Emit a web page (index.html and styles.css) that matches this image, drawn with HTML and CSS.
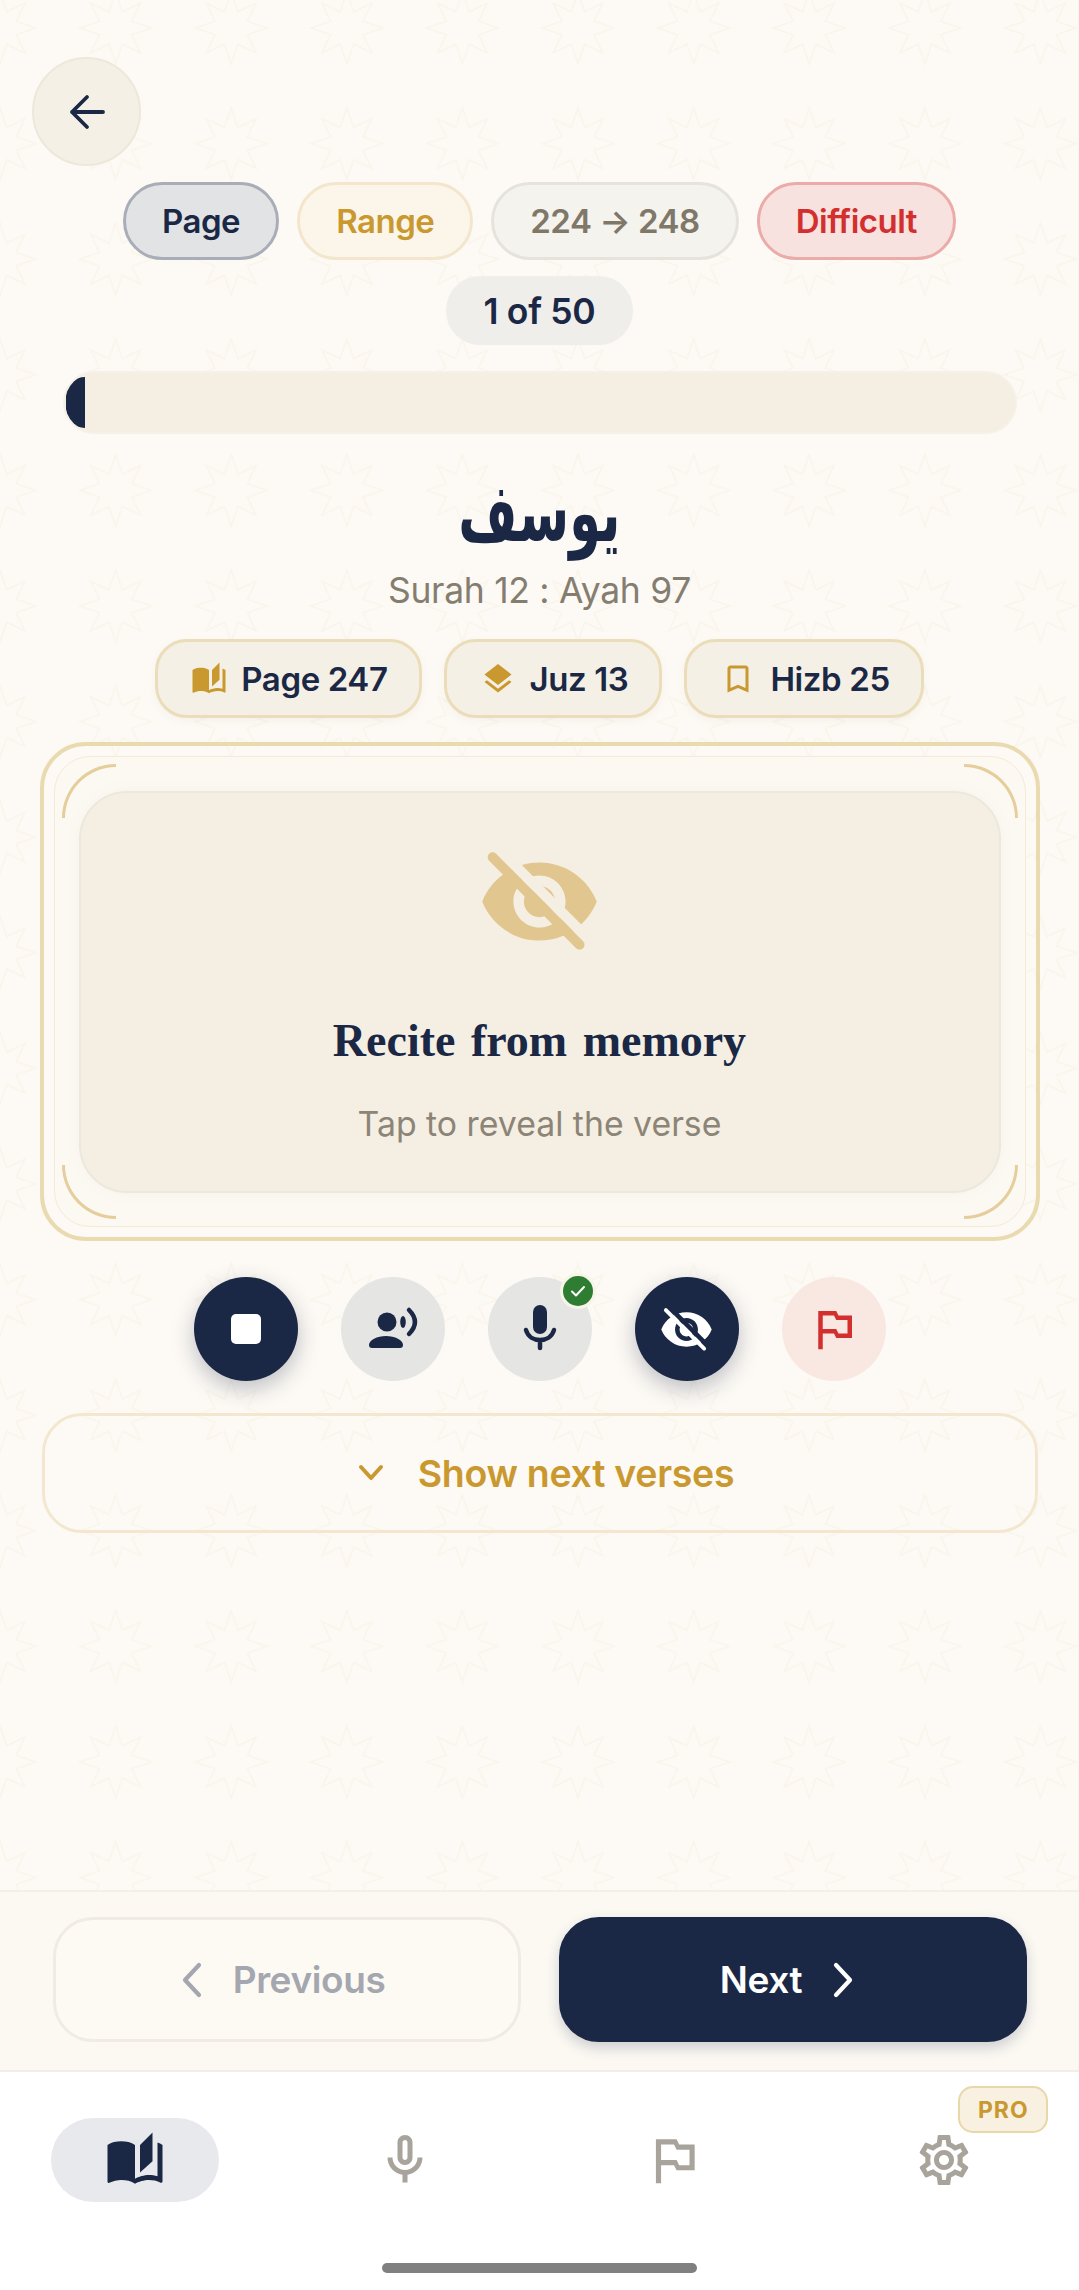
FILE: index.html
```html
<!DOCTYPE html>
<html lang="en">
<head>
  <meta charset="UTF-8" />
  <meta name="viewport" content="width=device-width, initial-scale=1.0" />
  <title>Recite</title>
  <link rel="stylesheet" href="styles.css">
</head>
<body>
  <main class="main">
    <!-- star pattern behind the content -->
    <svg class="pattern" aria-hidden="true">
      <defs>
        <pattern id="stars" x="-57.8" y="-29.8" width="115.6" height="115.6" patternUnits="userSpaceOnUse">
          <polygon transform="translate(57.8 57.8)" fill="none" stroke="#F9F5EB" stroke-width="1.6" points="0,-36 6.7,-16.1 25,-25 16.1,-6.7 36,0 16.1,6.7 25,25 6.7,16.1 0,36 -6.7,16.1 -25,25 -16.1,6.7 -36,0 -16.1,-6.7 -25,-25 -6.7,-16.1" />
        </pattern>
      </defs>
      <rect width="100%" height="100%" fill="url(#stars)" />
    </svg>

    <div class="back">
      <svg width="48" height="48" viewBox="0 0 24 24" fill="none" stroke="#1B2845" stroke-width="1.9" stroke-linecap="round" stroke-linejoin="round"><path d="M20 12H4.5M12 4.5 4.5 12l7.500 7.500" /></svg>
    </div>

    <div class="chips">
      <span class="chip chip-page">Page</span>
      <span class="chip chip-range">Range</span>
      <span class="chip chip-span">224 → 248</span>
      <span class="chip chip-hard">Difficult</span>
    </div>

    <div class="count">1 of 50</div>

    <div class="progress"><div class="progress-fill"></div></div>

    <h1 class="surah" lang="ar" dir="rtl">يوسف</h1>
    <p class="ayah">Surah 12 : Ayah 97</p>

    <div class="meta">
      <span class="meta-chip">
        <svg width="36" height="36" viewBox="0 0 24 24" fill="#C9982F"><path d="M19 1l-5 5v11l5-4.500V1zM1 6v14.650c0 .25.25.5.5.5.1 0 .15-.05.25-.05C3.100 20.450 5.050 20 6.500 20c1.950 0 4.050.4 5.500 1.500V6c-1.450-1.100-3.550-1.500-5.500-1.500S2.450 4.900 1 6zm22 13.500V6c-.6-.45-1.250-.75-2-1v13.500c-1.100-.35-2.300-.5-3.500-.5-1.700 0-4.150.65-5.500 1.500v2c1.350-.85 3.800-1.500 5.500-1.500 1.650 0 3.350.3 4.750 1.050.1.05.15.05.25.05.25 0 .5-.25.5-.5v-1z" /></svg>
        Page 247
      </span>
      <span class="meta-chip">
        <svg width="36" height="36" viewBox="0 0 24 24" fill="#C9982F"><path d="M11.990 18.540l-7.370-5.730L3 14.070l9 7 9-7-1.630-1.270-7.380 5.740zM12 16l7.360-5.730L21 9l-9-7-9 7 1.630 1.270L12 16z" /></svg>
        Juz 13
      </span>
      <span class="meta-chip">
        <svg width="36" height="36" viewBox="0 0 24 24" fill="#C9982F"><path d="M17 3H7c-1.100 0-2 .9-2 2v16l7-3 7 3V5c0-1.100-.9-2-2-2zm0 15l-5-2.180L7 18V5h10v13z" /></svg>
        Hizb 25
      </span>
    </div>

    <section class="frame">
      <div class="frame-inner">
        <span class="corner corner-tl"></span>
        <span class="corner corner-tr"></span>
        <span class="corner corner-bl"></span>
        <span class="corner corner-br"></span>
        <div class="card">
          <svg class="card-eye" width="125" height="125" viewBox="0 0 24 24">
            <path fill="#E1C78F" d="M12 4.500C7 4.500 2.730 7.610 1 12c1.730 4.390 6 7.500 11 7.500s9.270-3.110 11-7.500c-1.730-4.390-6-7.500-11-7.500zM12 17c-2.760 0-5-2.240-5-5s2.240-5 5-5 5 2.240 5 5-2.240 5-5 5zm0-8c-1.660 0-3 1.340-3 3s1.340 3 3 3 3-1.340 3-3-1.340-3-3-3z" />
            <path stroke="#F5EFE3" stroke-width="2" d="M4 1.800 23 20.800" />
            <path stroke="#E1C78F" stroke-width="1.900" stroke-linecap="round" d="M3 3.500 19.700 20.300" />
          </svg>
          <h2 class="card-title">Recite from memory</h2>
          <p class="card-sub">Tap to reveal the verse</p>
        </div>
      </div>
    </section>

    <div class="controls">
      <button class="ctl ctl-dark">
        <svg width="30" height="30" viewBox="0 0 30 30"><rect width="30" height="30" rx="5" fill="#fff" /></svg>
      </button>
      <button class="ctl ctl-grey">
        <svg width="64" height="64" viewBox="0 0 64 64" fill="#1B2845">
          <circle cx="26" cy="25" r="9.500" />
          <path d="M8 48c0-5 8-9 17-9s17 4 17 9c0 2-1 3-3 3H11c-2 0-3-1-3-3z" />
          <ellipse cx="42" cy="25" rx="2.800" ry="6" />
          <path d="M48 13Q60 25 48 37" fill="none" stroke="#1B2845" stroke-width="4.500" stroke-linecap="round" />
        </svg>
      </button>
      <button class="ctl ctl-grey">
        <svg width="64" height="64" viewBox="0 0 64 64" fill="#1B2845">
          <rect x="25" y="8" width="14" height="29" rx="7" />
          <path d="M18 33c2 7 8 10 14 10s12-3 14-10M32 43v8" fill="none" stroke="#1B2845" stroke-width="4.500" stroke-linecap="round" />
        </svg>
        <span class="ctl-badge">
          <svg width="18" height="18" viewBox="0 0 18 18" fill="none" stroke="#fff" stroke-width="2" stroke-linecap="round" stroke-linejoin="round"><path d="M3 9.500 7 13.500 15 5" /></svg>
        </span>
      </button>
      <button class="ctl ctl-dark">
        <svg width="55" height="55" viewBox="0 0 24 24">
          <path fill="#fff" d="M12 4.500C7 4.500 2.730 7.610 1 12c1.730 4.390 6 7.500 11 7.500s9.270-3.110 11-7.500c-1.730-4.390-6-7.500-11-7.500zM12 17c-2.760 0-5-2.240-5-5s2.240-5 5-5 5 2.240 5 5-2.240 5-5 5zm0-8c-1.660 0-3 1.340-3 3s1.340 3 3 3 3-1.340 3-3-1.340-3-3-3z" />
          <path stroke="#1B2845" stroke-width="2" d="M4 1.800 23 20.800" />
          <path stroke="#fff" stroke-width="1.700" stroke-linecap="round" d="M3 3.500 19.700 20.300" />
        </svg>
      </button>
      <button class="ctl ctl-flag">
        <svg width="54" height="54" viewBox="0 0 24 24" fill="#D32F2F"><path d="M14 6l-1-2H5v17h2v-7h5l1 2h7V6h-6zm4 8h-4l-1-2H7V6h5l1 2h5v6z" /></svg>
      </button>
    </div>

    <button class="next-verses">
      <svg width="28" height="20" viewBox="0 0 28 20" fill="none" stroke="#C9982F" stroke-width="4" stroke-linecap="round" stroke-linejoin="round"><path d="M4 4 14 15 24 4" /></svg>
      Show next verses
    </button>
  </main>

  <div class="pager">
    <button class="pager-btn pager-prev">
      <svg width="24" height="36" viewBox="0 0 24 36" fill="none" stroke="#A5A7B0" stroke-width="4.200" stroke-linecap="round" stroke-linejoin="round"><path d="M20 3 6 18 20 33" /></svg>
      Previous
    </button>
    <button class="pager-btn pager-next">
      Next
      <svg width="24" height="36" viewBox="0 0 24 36" fill="none" stroke="#fff" stroke-width="4.200" stroke-linecap="round" stroke-linejoin="round"><path d="M4 3 18 18 4 33" /></svg>
    </button>
  </div>

  <nav class="nav">
    <div class="nav-row">
      <div class="nav-item">
        <span class="nav-pill">
          <svg width="60" height="60" viewBox="0 0 24 24" fill="#1B2845"><path d="M19 1l-5 5v11l5-4.500V1zM1 6v14.650c0 .25.25.5.5.5.1 0 .15-.05.25-.05C3.100 20.450 5.050 20 6.500 20c1.950 0 4.050.4 5.500 1.500V6c-1.450-1.100-3.550-1.500-5.500-1.500S2.450 4.900 1 6zm22 13.500V6c-.6-.45-1.250-.75-2-1v13.500c-1.100-.35-2.300-.5-3.500-.5-1.700 0-4.150.65-5.500 1.500v2c1.350-.85 3.800-1.500 5.500-1.500 1.650 0 3.350.3 4.750 1.050.1.05.15.05.25.05.25 0 .5-.25.5-.5v-1z" /></svg>
        </span>
      </div>
      <div class="nav-item">
        <svg width="60" height="60" viewBox="0 0 24 24" fill="#A8A49B"><path d="M12 14c1.660 0 3-1.340 3-3V5c0-1.660-1.340-3-3-3S9 3.340 9 5v6c0 1.660 1.340 3 3 3zm-1-9c0-.55.45-1 1-1s1 .45 1 1v6c0 .55-.45 1-1 1s-1-.45-1-1V5zm6 6c0 2.760-2.240 5-5 5s-5-2.240-5-5H5c0 3.530 2.610 6.430 6 6.920V21h2v-3.080c3.390-.49 6-3.390 6-6.920h-2z" /></svg>
      </div>
      <div class="nav-item">
        <svg width="62" height="62" viewBox="0 0 24 24" fill="#A8A49B"><path d="M14 6l-1-2H5v17h2v-7h5l1 2h7V6h-6zm4 8h-4l-1-2H7V6h5l1 2h5v6z" /></svg>
      </div>
      <div class="nav-item nav-item-pro">
        <svg width="60" height="60" viewBox="0 0 24 24" fill="#A8A49B"><path d="M19.430 12.980c.04-.32.07-.64.07-.98 0-.34-.03-.66-.07-.98l2.110-1.650c.19-.15.24-.42.12-.64l-2-3.460c-.09-.16-.26-.25-.44-.25-.06 0-.12.01-.17.03l-2.490 1c-.52-.4-1.080-.73-1.690-.98l-.38-2.650C14.460 2.180 14.250 2 14 2h-4c-.25 0-.46.18-.49.42l-.38 2.650c-.61.25-1.170.59-1.690.98l-2.490-1c-.06-.02-.12-.03-.18-.03-.17 0-.34.09-.43.25l-2 3.460c-.13.22-.07.49.12.64l2.110 1.650c-.04.32-.07.65-.07.98 0 .33.03.66.07.98l-2.110 1.650c-.19.15-.24.42-.12.64l2 3.460c.09.16.26.25.44.25.06 0 .12-.01.17-.03l2.490-1c.52.4 1.080.73 1.690.98l.38 2.650c.03.24.24.42.49.42h4c.25 0 .46-.18.49-.42l.38-2.650c.61-.25 1.170-.59 1.690-.98l2.490 1c.06.02.12.03.18.03.17 0 .34-.09.43-.25l2-3.460c.12-.22.07-.49-.12-.64l-2.110-1.650zm-1.980-1.710c.04.31.05.52.05.73 0 .21-.02.43-.05.73l-.14 1.130.89.7 1.080.84-.7 1.210-1.270-.51-1.040-.42-.9.68c-.43.32-.84.56-1.250.73l-1.060.43-.16 1.130-.2 1.350h-1.400l-.19-1.350-.16-1.130-1.060-.43c-.43-.18-.83-.41-1.230-.71l-.91-.7-1.060.43-1.270.51-.7-1.210 1.080-.84.89-.7-.14-1.130c-.03-.31-.05-.54-.05-.74s.02-.43.05-.73l.14-1.130-.89-.7-1.080-.84.7-1.210 1.270.51 1.040.42.9-.68c.43-.32.84-.56 1.250-.73l1.060-.43.16-1.130.2-1.350h1.390l.19 1.350.16 1.130 1.060.43c.43.18.83.41 1.230.71l.91.7 1.060-.43 1.270-.51.7 1.210-1.070.85-.89.7.14 1.130zM12 8c-2.210 0-4 1.790-4 4s1.790 4 4 4 4-1.790 4-4-1.790-4-4-4zm0 6c-1.100 0-2-.9-2-2s.9-2 2-2 2 .9 2 2-.9 2-2 2z" /></svg>
        <span class="pro">PRO</span>
      </div>
    </div>
    <div class="home-bar"></div>
  </nav>
</body>
</html>
```

FILE: styles.css
```css
* {
  box-sizing: border-box;
}

body {
  margin: 0;
  width: 1079px;
  height: 2290px;
  display: flex;
  flex-direction: column;
  background: #FDFAF5;
  color: #1B2845;
  font-family: Inter, 'Liberation Sans', sans-serif;
  overflow: hidden;
}

button {
  font-family: inherit;
}

.main {
  position: relative;
  flex: 1;
  display: flex;
  flex-direction: column;
  align-items: center;
  padding-top: 57px;
}

.pattern {
  position: absolute;
  top: 0;
  left: 0;
  width: 100%;
  height: 100%;
}

.main > *:not(.pattern) {
  position: relative;
}

.back {
  align-self: flex-start;
  margin-left: 32px;
  width: 109px;
  height: 109px;
  border-radius: 50%;
  background: #F5F0E5;
  border: 2px solid #EDE8DA;
  display: flex;
  align-items: center;
  justify-content: center;
}

.chips {
  display: flex;
  gap: 18px;
  margin-top: 16px;
}

.chip {
  height: 78px;
  padding: 0 36px;
  border-radius: 39px;
  border: 3px solid;
  display: flex;
  align-items: center;
  font-size: 33px;
  font-weight: 600;
  letter-spacing: -0.5px;
}

.chip-page {
  background: #E2E3E4;
  border-color: #A9ADB8;
  color: #1B2845;
}

.chip-range {
  background: #FCF5EA;
  border-color: #F3E6CC;
  color: #C9982F;
}

.chip-span {
  background: #F5F3EE;
  border-color: #E6E3DD;
  color: #7F7868;
}

.chip-hard {
  background: #F7E2DF;
  border-color: #EBABA8;
  color: #D32F2F;
}

.count {
  margin-top: 16px;
  height: 69px;
  width: 187px;
  padding-top: 2px;
  border-radius: 34px;
  background: #F0EEEB;
  display: flex;
  align-items: center;
  justify-content: center;
  font-size: 35.5px;
  font-weight: 600;
  letter-spacing: -0.3px;
}

.progress {
  margin-top: 26px;
  width: 954px;
  height: 63px;
  padding: 4px 0 4px 1px;
  border-radius: 32px;
  background: #F5EFE3;
  border: 2px solid #F6F1E8;
  overflow: hidden;
}

.progress-fill {
  width: 19px;
  height: 100%;
  background: #1B2845;
  border-radius: 28px 0 0 28px;
}

.surah {
  margin: 35px 0 0;
  height: 90px;
  font-family: 'Liberation Serif', 'DejaVu Sans', serif;
  font-size: 60px;
  font-weight: 700;
  line-height: 90px;
  transform: scale(0.85, 1.35);
}

.ayah {
  margin: 10px 0 0;
  font-size: 35.5px;
  line-height: 44px;
  color: #857E70;
  letter-spacing: -0.3px;
}

.meta {
  display: flex;
  gap: 22px;
  margin-top: 26px;
}

.meta-chip {
  height: 79px;
  padding: 0 31px 0 33px;
  border-radius: 32px;
  background: #F5F0E5;
  border: 3px solid #EBDDB9;
  box-shadow: 0 3px 8px rgba(100, 80, 30, 0.05);
  display: flex;
  align-items: center;
  gap: 14px;
  font-size: 33px;
  font-weight: 600;
  letter-spacing: -0.4px;
}

.frame {
  margin-top: 24px;
  width: 1000px;
  height: 499px;
  padding: 10px;
  border: 4px solid #EADAB0;
  border-radius: 46px;
}

.frame-inner {
  position: relative;
  height: 100%;
  padding: 34px 24px 33px;
  border: 1.5px solid #F3EBD8;
  border-radius: 36px;
  background: #FCF9F3;
}

.corner {
  position: absolute;
  width: 54px;
  height: 54px;
  border: 0 solid #E5CE9C;
}

.corner-tl {
  top: 7px;
  left: 7px;
  border-top-width: 3px;
  border-left-width: 3px;
  border-top-left-radius: 54px;
}

.corner-tr {
  top: 7px;
  right: 7px;
  border-top-width: 3px;
  border-right-width: 3px;
  border-top-right-radius: 54px;
}

.corner-bl {
  bottom: 7px;
  left: 7px;
  border-bottom-width: 3px;
  border-left-width: 3px;
  border-bottom-left-radius: 54px;
}

.corner-br {
  bottom: 7px;
  right: 7px;
  border-bottom-width: 3px;
  border-right-width: 3px;
  border-bottom-right-radius: 54px;
}

.card {
  height: 100%;
  padding-top: 46px;
  border-radius: 48px;
  background: #F5EFE3;
  border: 2.5px solid #EDE8DC;
  box-shadow: 0 0 18px rgba(120, 100, 60, 0.04);
  display: flex;
  flex-direction: column;
  align-items: center;
}

.card-title {
  margin: 47px 0 0;
  font-family: 'Liberation Serif', serif;
  font-size: 46px;
  line-height: 60px;
  font-weight: 700;
  word-spacing: 4px;
}

.card-sub {
  margin: 31px 0 0;
  font-size: 33.8px;
  line-height: 44px;
  color: #8C8577;
}

.controls {
  display: flex;
  gap: 43px;
  margin-top: 36px;
}

.ctl {
  position: relative;
  width: 104px;
  height: 104px;
  padding: 0;
  border: 0;
  border-radius: 50%;
  display: flex;
  align-items: center;
  justify-content: center;
}

.ctl-dark {
  background: #1B2845;
  box-shadow: 0 8px 22px rgba(27, 40, 69, 0.28);
}

.ctl-grey {
  background: #E5E5E4;
}

.ctl-flag {
  background: #F9E7E1;
}

.ctl-badge {
  position: absolute;
  top: -4px;
  right: -4px;
  width: 36px;
  height: 36px;
  border-radius: 50%;
  background: #2E7D32;
  border: 3px solid #F7F4E8;
  display: flex;
  align-items: center;
  justify-content: center;
}

.next-verses {
  margin-top: 32px;
  width: 996px;
  height: 120px;
  padding: 0 0 0 12px;
  background: transparent;
  border: 3px solid #F3E8CF;
  border-radius: 40px;
  display: flex;
  align-items: center;
  justify-content: center;
  gap: 33px;
  font-size: 37.5px;
  font-weight: 600;
  letter-spacing: -0.3px;
  color: #C9982F;
}

.pager {
  height: 180px;
  padding: 25px 52px 0 53px;
  display: flex;
  gap: 38px;
  background: #FCF9F3;
  border-top: 2px solid #F4F0E6;
}

.pager-btn {
  flex: 1;
  height: 125px;
  padding: 0 10px 0 0;
  border-radius: 40px;
  border: 3px solid;
  display: flex;
  align-items: center;
  justify-content: center;
  gap: 30px;
  font-size: 37px;
  font-weight: 600;
  letter-spacing: -0.4px;
}

.pager-prev {
  background: #FDFAF4;
  border-color: #F0ECE3;
  color: #A5A7B0;
}

.pager-next {
  background: #1B2845;
  border-color: #1B2845;
  color: #fff;
  box-shadow: 0 6px 14px rgba(27, 40, 69, 0.2);
}

.nav {
  height: 220px;
  background: #fff;
  border-top: 2px solid #F2EEE6;
  display: flex;
  flex-direction: column;
  align-items: center;
  padding-top: 46px;
}

.nav-row {
  width: 100%;
  height: 84px;
  display: grid;
  grid-template-columns: repeat(4, 1fr);
}

.nav-item {
  position: relative;
  display: flex;
  align-items: center;
  justify-content: center;
}

.nav-pill {
  width: 168px;
  height: 84px;
  border-radius: 42px;
  background: #E8E9ED;
  display: flex;
  align-items: center;
  justify-content: center;
}

.pro {
  position: absolute;
  top: -32px;
  left: 149px;
  width: 90px;
  height: 47px;
  border-radius: 15px;
  background: #F8F1E2;
  border: 2px solid #E9D6A9;
  display: flex;
  align-items: center;
  justify-content: center;
  font-size: 23px;
  font-weight: 700;
  letter-spacing: 1px;
  color: #C9982F;
}

.home-bar {
  margin-top: 61px;
  width: 315px;
  height: 10px;
  border-radius: 5px;
  background: #808080;
}
```
